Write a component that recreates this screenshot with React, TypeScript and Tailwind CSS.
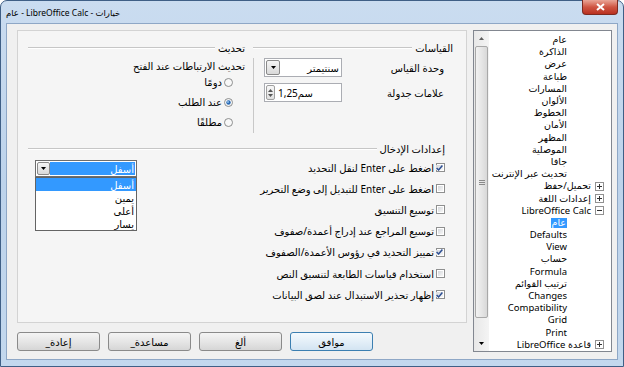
import React from "react";

// Windows 7 style "Options" dialog, Arabic UI (RTL content)

const treeItems: { label: string; kind: "child" | "open" | "closed"; selected?: boolean }[] = [
  { label: "عام", kind: "child" },
  { label: "الذاكرة", kind: "child" },
  { label: "عرض", kind: "child" },
  { label: "طباعة", kind: "child" },
  { label: "المسارات", kind: "child" },
  { label: "الألوان", kind: "child" },
  { label: "الخطوط", kind: "child" },
  { label: "الأمان", kind: "child" },
  { label: "المظهر", kind: "child" },
  { label: "الموصلية", kind: "child" },
  { label: "جافا", kind: "child" },
  { label: "تحديث عبر الإنترنت", kind: "child" },
  { label: "تحميل/حفظ", kind: "closed" },
  { label: "إعدادات اللغة", kind: "closed" },
  { label: "LibreOffice Calc", kind: "open" },
  { label: "عام", kind: "child", selected: true },
  { label: "Defaults", kind: "child" },
  { label: "View", kind: "child" },
  { label: "حساب", kind: "child" },
  { label: "Formula", kind: "child" },
  { label: "ترتيب القوائم", kind: "child" },
  { label: "Changes", kind: "child" },
  { label: "Compatibility", kind: "child" },
  { label: "Grid", kind: "child" },
  { label: "Print", kind: "child" },
  { label: "قاعدة LibreOffice", kind: "closed" },
];

const inputOptions = [
  { label: "اضغط على Enter لنقل التحديد", checked: true },
  { label: "اضغط على Enter للتبديل إلى وضع التحرير", checked: false },
  { label: "توسيع التنسيق", checked: false },
  { label: "توسيع المراجع عند إدراج أعمدة/صفوف", checked: false },
  { label: "تمييز التحديد في رؤوس الأعمدة/الصفوف", checked: true },
  { label: "استخدام قياسات الطابعة لتنسيق النص", checked: false },
  { label: "إظهار تحذير الاستبدال عند لصق البيانات", checked: true },
];

function DownArrow() {
  return (
    <svg width="5" height="3" viewBox="0 0 5 3">
      <path d="M0 0 L5 0 L2.5 3 Z" fill="#000" />
    </svg>
  );
}

function CheckBox({ checked }: { checked: boolean }) {
  return (
    <span className="w-[9px] h-[9px] shrink-0 border border-[#8e8f8f] bg-white p-[1px] flex">
      <span className="flex-1 bg-gradient-to-br from-[#d4d7db] to-[#f7f7f7] flex items-center justify-center">
        {checked && (
          <svg width="7" height="6" viewBox="0 0 7 6">
            <path d="M0.6 3 L2.6 5 L6.4 0.6" stroke="#2d4f93" strokeWidth="1.5" fill="none" />
          </svg>
        )}
      </span>
    </span>
  );
}

function Radio({ checked }: { checked: boolean }) {
  return (
    <svg width="9" height="9" viewBox="0 0 9 9" className="shrink-0">
      <circle cx="4.5" cy="4.5" r="4" fill="#ececec" stroke="#8e8f8f" strokeWidth="1" />
      <circle cx="4.5" cy="4.5" r="3" fill="#f8f8f8" />
      {checked && <circle cx="4.5" cy="4.5" r="2.2" fill="#2a6bb5" />}
      {checked && <circle cx="4" cy="4" r="0.9" fill="#9cc8f0" />}
    </svg>
  );
}

function GroupHeader({ title, className }: { title: string; className?: string }) {
  return (
    <div className={"flex items-center h-[12px] " + (className ?? "")}>
      <span className="whitespace-nowrap">{title}</span>
      <span className="flex-1 mr-[3px] h-[2px] border-t border-[#c6c6c6] border-b border-b-white" />
    </div>
  );
}

function Button({ label, def }: { label: React.ReactNode; def?: boolean }) {
  return (
    <div
      className={
        "w-[83px] h-[19px] rounded-[3px] border flex items-center justify-center " +
        (def
          ? "border-[#3c7fb1] bg-gradient-to-b from-[#f4f9fd] via-[#e4eff8] to-[#d3e4f2]"
          : "border-[#8a8a8a] bg-gradient-to-b from-[#f4f4f4] via-[#e6e6e6] to-[#d6d6d6]")
      }
    >
      {label}
    </div>
  );
}

export default function App() {
  return (
    <div className="w-[624px] h-[367px] overflow-hidden bg-white font-['Noto_Sans','DejaVu_Sans',sans-serif] text-[10px] leading-[12px] text-black">
      <div className="w-full h-full flex flex-col rounded-t-[7px] border border-[#3f5f86] bg-gradient-to-b from-[#cadcf0] via-[#bdd3eb] to-[#c3d8ee] px-[5px] pb-[6px]">
        {/* title bar */}
        <div className="h-[22px] flex items-start justify-between">
          <div dir="rtl" className="pt-[6px] text-[8.5px] leading-[11px] whitespace-nowrap">
            خيارات - LibreOffice Calc - عام
          </div>
          <div className="w-[36px] h-[15px] -mt-[1px] rounded-b-[4px] border border-[#7d2a20] border-t-0 bg-gradient-to-b from-[#e9a597] via-[#cf5543] to-[#b9301f] flex items-center justify-center">
            <svg width="9" height="8" viewBox="0 0 9 8">
              <path d="M1 1 L8 7 M8 1 L1 7" stroke="#fff" strokeWidth="2" />
            </svg>
          </div>
        </div>

        {/* client area */}
        <div className="flex-1 flex border border-[#8ea7c6] bg-[#f0f0f0] pl-[10px] pr-[4px] pt-[6px] pb-[6px] gap-[6px]">
          {/* left: page + buttons */}
          <div className="w-[450px] flex flex-col">
            <div dir="rtl" className="h-[293px] border border-[#d3d3d3] bg-[#f5f5f5] pt-[11px] pr-[13px] pl-[10px] flex flex-col">
              {/* top row: measurements + update */}
              <div className="flex">
                <div className="w-[200px] flex flex-col">
                  <GroupHeader title="القياسات" />
                  <div className="mt-[4px] h-[75px] border-l border-[#c8c8c8] pl-[10px] pr-[9px] flex flex-col gap-[6px]">
                    <div className="h-[19px] flex items-center justify-between">
                      <span>وحدة القياس</span>
                      <div className="w-[78px] h-[19px] border border-[#abadb3] bg-white flex items-center justify-between pr-[2px] pl-[1px]">
                        <span>سنتيمتر</span>
                        <span className="w-[14px] h-[15px] rounded-[2px] border border-[#8a8a8a] bg-gradient-to-b from-[#f5f5f5] to-[#d9d9d9] flex items-center justify-center">
                          <DownArrow />
                        </span>
                      </div>
                    </div>
                    <div className="h-[19px] flex items-center justify-between">
                      <span>علامات جدولة</span>
                      <div className="w-[78px] h-[19px] border border-[#abadb3] bg-white flex items-center justify-end pl-[1px]">
                        <span dir="ltr" className="mr-auto ml-[3px] order-2">1,25سم</span>
                        <span className="order-3 w-[9px] h-[15px] rounded-[2px] border border-[#a0a0a0] bg-gradient-to-b from-[#f7f7f7] to-[#e0e0e0] flex flex-col items-center justify-center gap-[2px]">
                          <svg width="5" height="3" viewBox="0 0 5 3"><path d="M0 3 L5 3 L2.5 0 Z" fill="#555" /></svg>
                          <svg width="5" height="3" viewBox="0 0 5 3"><path d="M0 0 L5 0 L2.5 3 Z" fill="#555" /></svg>
                        </span>
                      </div>
                    </div>
                  </div>
                </div>
                <div className="flex-1 ml-0 mr-[8px] flex flex-col">
                  <GroupHeader title="تحديث" />
                  <div className="mt-[6px] h-[12px]">تحديث الارتباطات عند الفتح</div>
                  <div className="pr-[12px] flex flex-col">
                    {[
                      { t: "دومًا", c: false },
                      { t: "عند الطلب", c: true },
                      { t: "مطلقًا", c: false },
                    ].map((r) => (
                      <div key={r.t} className="h-[20px] flex items-center gap-[2px]">
                        <Radio checked={r.c} />
                        <span>{r.t}</span>
                      </div>
                    ))}
                  </div>
                </div>
              </div>

              {/* input settings */}
              <GroupHeader title="إعدادات الإدخال" className="mt-[10px] mr-[8px]" />
              <div className="mt-[2px] mr-[8px] flex justify-between">
                <div className="flex flex-col">
                  {inputOptions.map((o) => (
                    <div key={o.label} className="h-[21.2px] flex items-center gap-[2px] whitespace-nowrap">
                      <CheckBox checked={o.checked} />
                      <span>{o.label}</span>
                    </div>
                  ))}
                </div>
                <div className="ml-[7px] mt-[3px] relative w-[102px] h-[17px]">
                  <div className="w-full h-full border border-[#6d6d6d] bg-white flex items-center justify-between p-[1px]">
                    <span className="flex-1 h-full bg-[#3399ff] text-white pr-[1px] flex items-center">أسفل</span>
                    <span className="w-[13px] h-full rounded-[2px] border border-[#8a8a8a] bg-gradient-to-b from-[#f5f5f5] to-[#d9d9d9] flex items-center justify-center">
                      <DownArrow />
                    </span>
                  </div>
                  <div className="absolute top-full left-0 w-full border border-[#646464] bg-white flex flex-col">
                    <span className="h-[13px] bg-[#3399ff] text-white pr-[2px] flex items-center">أسفل</span>
                    <span className="h-[13px] pr-[2px] flex items-center">يمين</span>
                    <span className="h-[13px] pr-[2px] flex items-center">أعلى</span>
                    <span className="h-[13px] pr-[2px] flex items-center">يسار</span>
                  </div>
                </div>
              </div>
            </div>

            {/* buttons */}
            <div className="mt-[9px] flex gap-[8px]">
              <Button label={<span className="flex"><span>_</span><span dir="rtl">إعادة</span></span>} />
              <Button label={<span className="flex"><span>_</span><span dir="rtl">مساعدة</span></span>} />
              <Button label={<span dir="rtl">ألغ</span>} />
              <Button label={<span dir="rtl">موافق</span>} def />
            </div>
          </div>

          {/* right: tree */}
          <div className="w-[139px] h-[322px] border border-[#828790] bg-white flex text-[9.5px] leading-[10px]">
            {/* scrollbar */}
            <div className="w-[15px] h-full bg-gradient-to-r from-[#e8e8e8] to-[#f4f4f4] flex flex-col">
              <div className="h-[15px] flex items-center justify-center">
                <svg width="5" height="3" viewBox="0 0 5 3"><path d="M0 3 L5 3 L2.5 0 Z" fill="#606060" /></svg>
              </div>
              <div className="mx-[1px] h-[272px] rounded-[2px] border border-[#a8a8a8] bg-gradient-to-r from-[#f2f2f2] via-[#e6e6e6] to-[#d8d8d8] flex items-center justify-center">
                <div className="flex flex-col gap-[1px]">
                  <span className="w-[6px] h-px bg-[#8a8a8a]" />
                  <span className="w-[6px] h-px bg-[#8a8a8a]" />
                  <span className="w-[6px] h-px bg-[#8a8a8a]" />
                </div>
              </div>
              <div className="flex-1" />
              <div className="h-[15px] flex items-center justify-center">
                <DownArrow />
              </div>
            </div>
            {/* items */}
            <div className="flex-1 pt-[3px] flex flex-col">
              {treeItems.map((it, i) =>
                it.kind === "child" ? (
                  <div key={i} className="h-[12.2px] flex items-center justify-end pr-[44px] whitespace-nowrap">
                    <span dir="rtl" className={it.selected ? "bg-[#3399ff] text-white px-[1px]" : ""}>
                      {it.label}
                    </span>
                  </div>
                ) : (
                  <div key={i} className="h-[12.2px] flex items-center justify-end pr-[7px] whitespace-nowrap">
                    <span dir="rtl">{it.label}</span>
                    <span className="ml-[4px] w-[9px] h-[9px] border border-[#919191] bg-white flex items-center justify-center">
                      <svg width="5" height="5" viewBox="0 0 5 5">
                        <path d={it.kind === "open" ? "M0 2.5 H5" : "M0 2.5 H5 M2.5 0 V5"} stroke="#333" strokeWidth="1" />
                      </svg>
                    </span>
                  </div>
                )
              )}
            </div>
          </div>
        </div>
      </div>
    </div>
  );
}
